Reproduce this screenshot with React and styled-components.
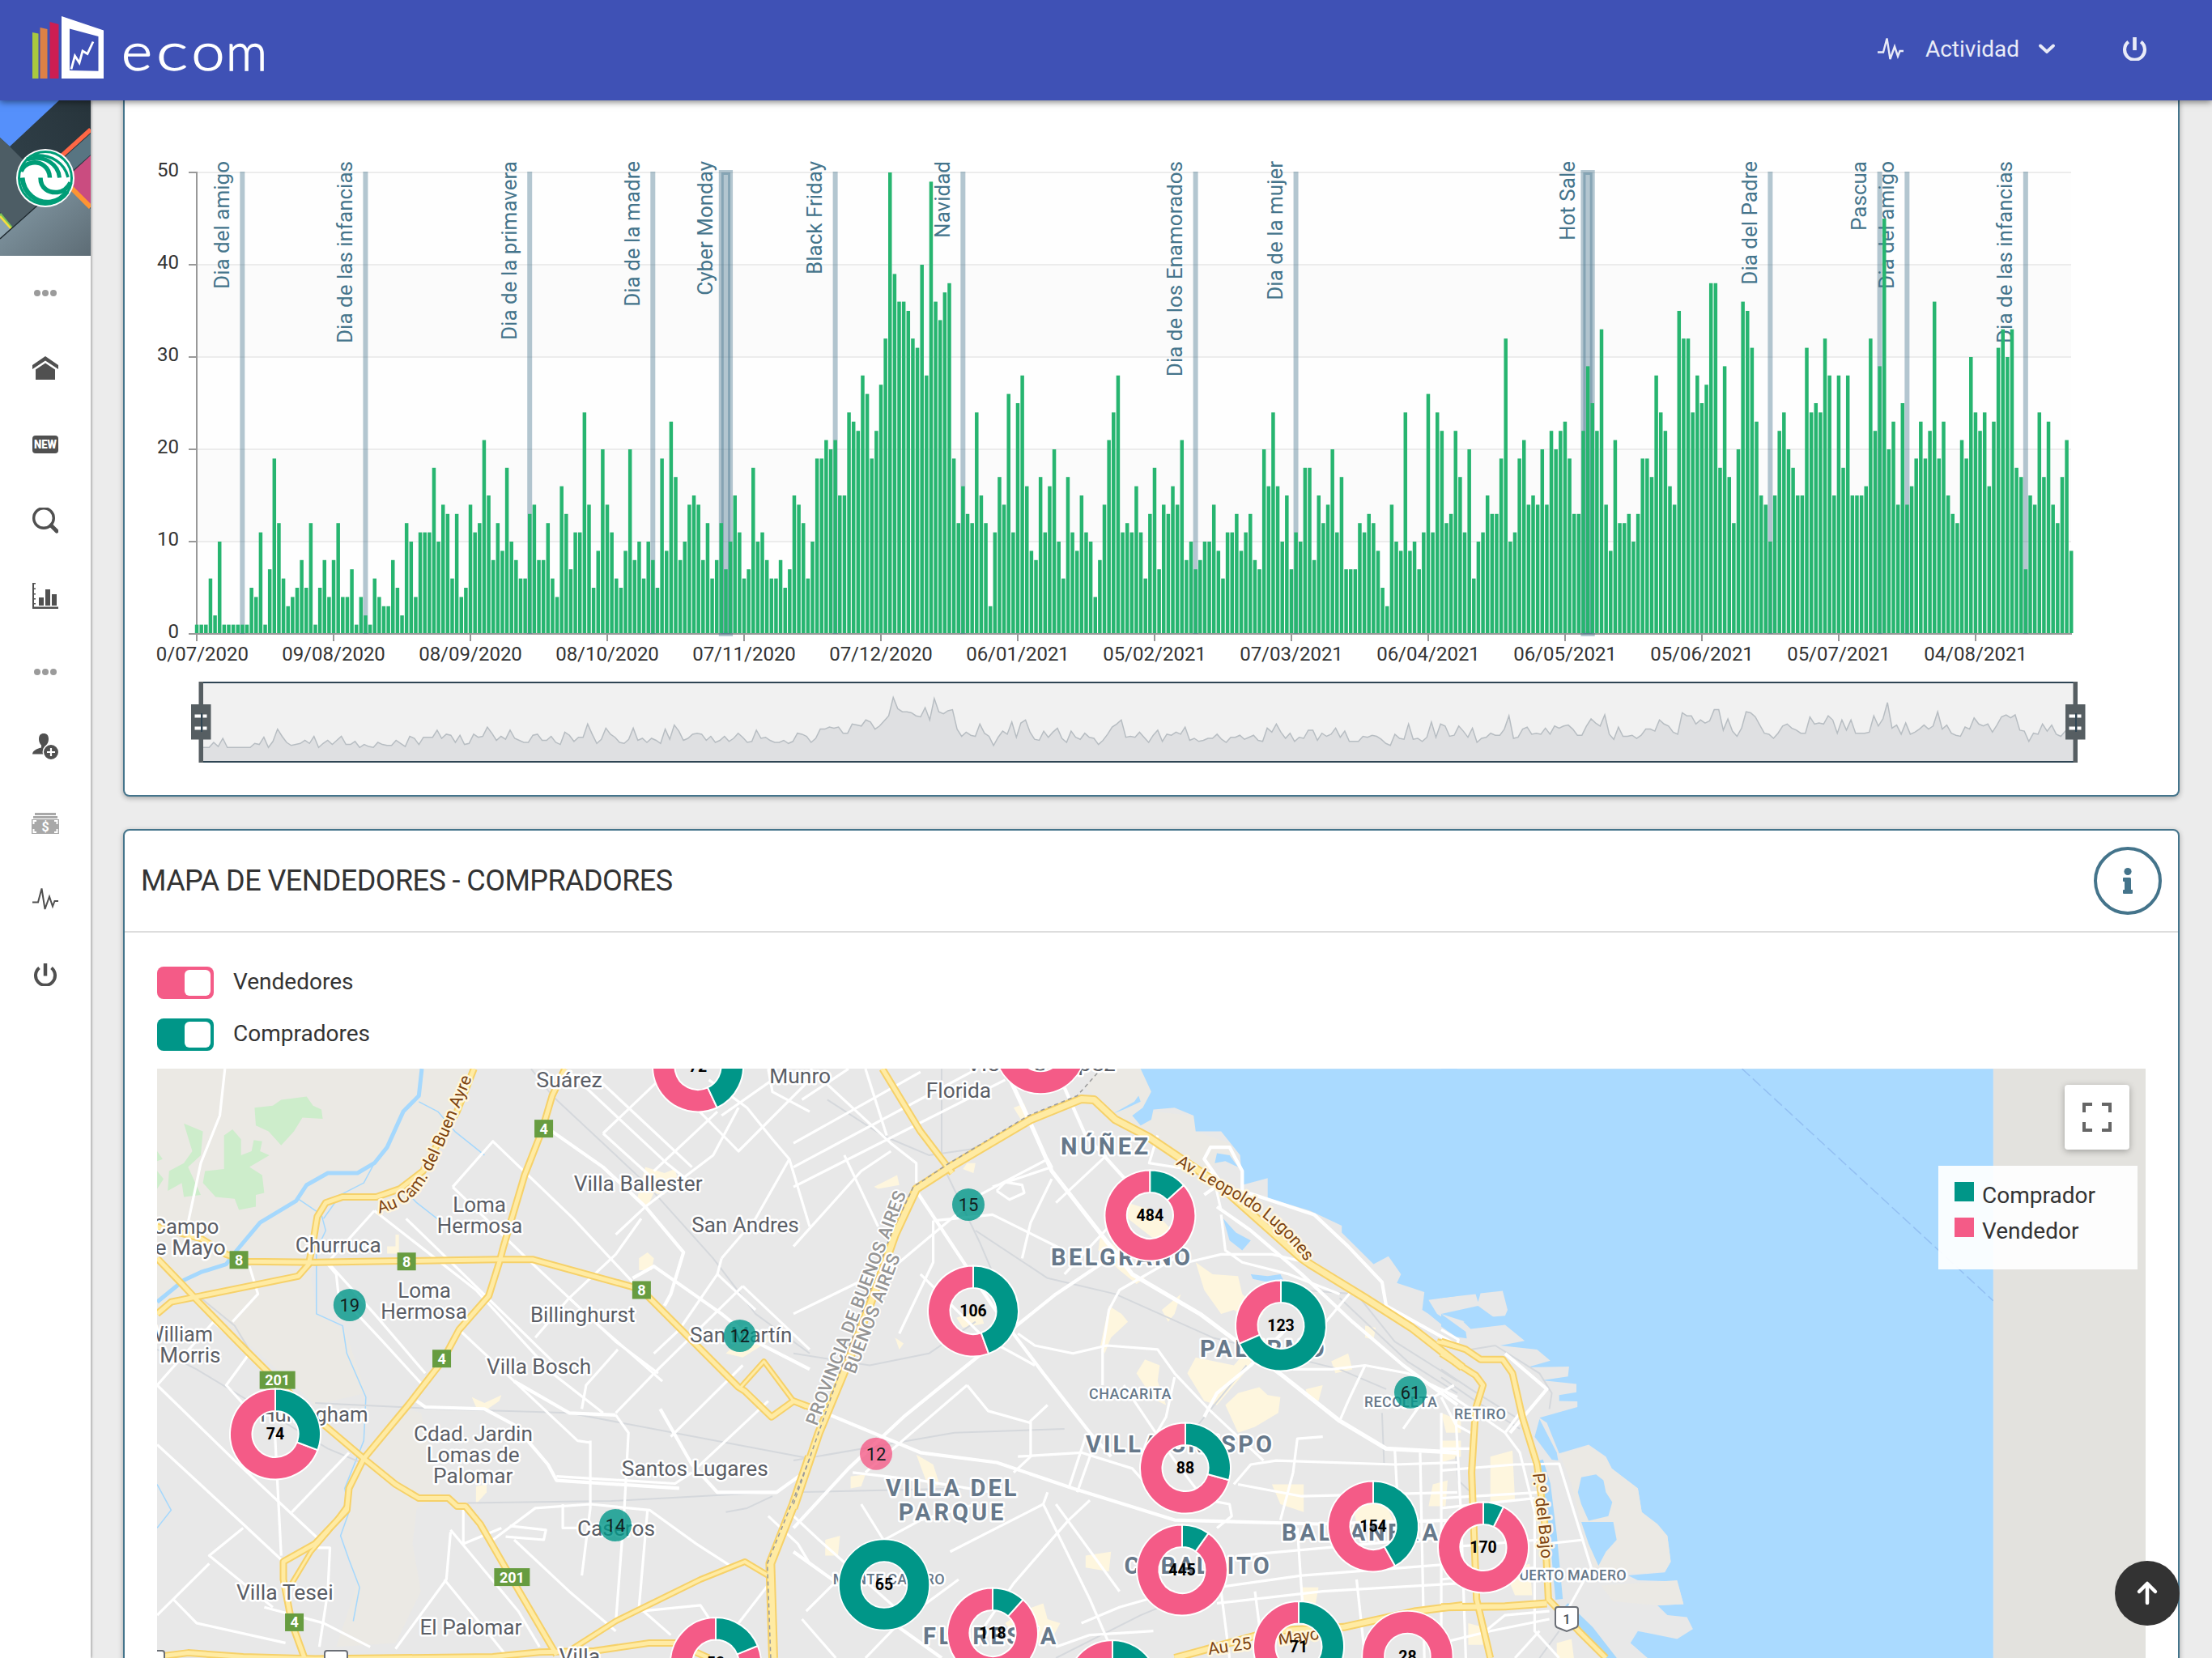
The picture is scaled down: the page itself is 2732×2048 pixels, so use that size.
import React from 'react';
import styled, { createGlobalStyle } from 'styled-components';

const GREEN = '#009688';
const PINK = '#f45b87';
const BLUE = '#44748b';

const GlobalStyle = createGlobalStyle`
  * { box-sizing: border-box; }
  html, body { margin: 0; padding: 0; height: 100%; overflow: hidden; }
  body { background: #ececec; color: #333; font-family: Roboto, "Liberation Sans", sans-serif; }
  svg { display: block; }
`;

/* ---------- layout ---------- */

const Page = styled.div`
  display: flex;
  flex-direction: column;
  width: 2732px;
  height: 2048px;
  overflow: hidden;
`;

const TopBar = styled.header`
  display: flex;
  align-items: center;
  justify-content: space-between;
  flex: none;
  height: 124px;
  padding: 0 81px 4px 40px;
  background: #3f51b5;
  color: #e9ebf7;
  position: relative;
  z-index: 5;
  box-shadow: 0 2px 8px rgba(0, 0, 0, 0.5);
`;

const TopNav = styled.nav`
  display: flex;
  align-items: center;
`;

const NavLink = styled.span`
  margin: 0 24px 0 27px;
  font-size: 28px;
  line-height: 36px;
  padding-top: 1px;
`;

const PowerSlot = styled.span`
  margin-left: 84px;
`;

const Body = styled.div`
  display: flex;
  flex: 1;
  min-height: 0;
`;

const Sidebar = styled.aside`
  display: flex;
  flex-direction: column;
  align-items: center;
  flex: none;
  width: 112px;
  background: #fff;
  box-shadow: 1px 0 3px rgba(0, 0, 0, 0.35);
`;

const MenuItem = styled.div`
  display: flex;
  align-items: center;
  justify-content: center;
  width: 112px;
  height: ${(p) => p.$h || 93.6}px;
  color: ${(p) => (p.$muted ? '#9b9b9b' : '#505050')};
`;

const Content = styled.main`
  display: flex;
  flex-direction: column;
  gap: 40px;
  flex: 1;
  padding: 0 40px;
`;

const Card = styled.section`
  flex: none;
  height: ${(p) => p.$h}px;
  background: #fff;
  border: 2px solid ${BLUE};
  border-top-width: ${(p) => (p.$open ? 0 : 2)}px;
  border-radius: ${(p) => (p.$open ? '0 0 8px 8px' : '8px')};
  box-shadow: 0 2px 6px rgba(0, 0, 0, 0.3);
  overflow: hidden;
`;

const CardHeader = styled.div`
  display: flex;
  align-items: center;
  justify-content: space-between;
  height: 126px;
  padding: 0 20px;
  border-bottom: 2px solid #ddd;
`;

const CardTitle = styled.h2`
  margin: 0;
  font-size: 36px;
  font-weight: 400;
  letter-spacing: -0.57px;
  color: #333;
`;

const InfoButton = styled.button`
  display: flex;
  align-items: center;
  justify-content: center;
  width: 84px;
  height: 84px;
  padding: 0;
  border: 4px solid ${BLUE};
  border-radius: 50%;
  background: #fff;
  color: ${BLUE};
`;

const CardBody = styled.div`
  padding: 42px 40px 0;
`;

const ToggleRow = styled.label`
  display: flex;
  align-items: center;
  gap: 24px;
  height: 40px;
  margin-bottom: ${(p) => p.$gap}px;
  font-size: 28px;
`;

const Track = styled.span`
  display: flex;
  justify-content: flex-end;
  width: 70px;
  height: 40px;
  padding: 4px;
  border-radius: 8px;
  background: ${(p) => p.$color};
`;

const Knob = styled.span`
  width: 32px;
  height: 32px;
  border-radius: 6px;
  background: #fff;
`;

const ToggleText = styled.span`
  padding-bottom: 4px;
`;

const MapFrame = styled.div`
  position: relative;
  width: 2456px;
  height: 728px;
`;

const MapControl = styled.button`
  position: absolute;
  top: 20px;
  right: 20px;
  display: flex;
  align-items: center;
  justify-content: center;
  width: 80px;
  height: 80px;
  padding: 0;
  border: 0;
  border-radius: 4px;
  background: #fff;
  box-shadow: 0 2px 8px rgba(0, 0, 0, 0.3);
`;

const Legend = styled.div`
  position: absolute;
  top: 120px;
  right: 10px;
  display: flex;
  flex-direction: column;
  gap: 8px;
  width: 246px;
  height: 128px;
  padding: 18px 20px;
  background: rgba(255, 255, 255, 0.93);
`;

const LegendItem = styled.div`
  display: flex;
  gap: 10px;
  height: 36px;
  font-size: 28px;
  line-height: 38px;
`;

const Swatch = styled.span`
  width: 24px;
  height: 24px;
  margin-top: 2px;
  background: ${(p) => p.$color};
`;

const BackToTop = styled.button`
  position: fixed;
  right: 40px;
  bottom: 40px;
  z-index: 6;
  display: flex;
  align-items: center;
  justify-content: center;
  width: 80px;
  height: 80px;
  padding: 0;
  border: 0;
  border-radius: 50%;
  background: #333;
`;

/* ---------- icons ---------- */

const PulseIcon = ({ light }) => (
  <svg width="32" height="32" viewBox={light ? '0 0 32 32' : '0 1 32 32'} fill="none" stroke="currentColor" strokeWidth={light ? 2.4 : 2} strokeLinejoin="miter">
    <path d="M0 20.5h7L11.5 3.5 15.500 29 21 13.500 25 25.500 27.500 19H32" />
  </svg>
);

const PowerIcon = ({ size = 28 }) => (
  <svg width={size} height={size} viewBox="0 0 28 28" fill="none" stroke="currentColor" strokeWidth="4">
    <path d="M6.500 5.500A12 12 0 1 0 21.500 5.500" />
    <path d="M14 0v15.500" strokeWidth="4.500" />
  </svg>
);

const DotsIcon = () => (
  <svg width="28" height="8" viewBox="0 0 28 8" fill="currentColor">
    <circle cx="4" cy="4" r="4" /><circle cx="14" cy="4" r="4" /><circle cx="24" cy="4" r="4" />
  </svg>
);

const HomeIcon = () => (
  <svg width="32" height="30" viewBox="0 1 32 30" fill="currentColor">
    <path d="M16 1 0 12v5L16 6.500l16 10.500v-5z" />
    <path d="M16 9.500 4 17.500V30h24V17.500z" />
  </svg>
);

const NewIcon = () => (
  <svg width="32" height="22" viewBox="0 0 32 22">
    <rect width="32" height="22" rx="4" fill="currentColor" />
    <text x="16" y="16" textAnchor="middle" textLength="28" lengthAdjust="spacingAndGlyphs" fill="#fff" fontSize="14" fontWeight="900" fontFamily="Roboto, sans-serif">NEW</text>
  </svg>
);

const SearchIcon = () => (
  <svg width="32" height="32" viewBox="0 1 32 32" fill="none" stroke="currentColor">
    <circle cx="14" cy="14" r="12.300" strokeWidth="3.400" />
    <path d="m23 23 7 7" strokeWidth="5" strokeLinecap="round" />
  </svg>
);

const BarsIcon = () => (
  <svg width="32" height="32" viewBox="0 0 32 32" fill="currentColor">
    <path d="M0 0h4v1.500H2v5h2V8H2v5h2v1.500H2v4.500h2v1.500H2V25h2v1.500H2V29.500h30V32H0z" />
    <path d="M8 18h6v10H8zM16 8h6v20h-6zM24 14h6v14h-6z" />
  </svg>
);

const UserAddIcon = () => (
  <svg width="32" height="32" viewBox="0 0 32 32" fill="currentColor">
    <path d="M14 0c4 0 6 2.500 6 7 0 3.500-1.500 6-3 7.500V17l-3 8.500H0c.500-4.500 5-6.500 11-8v-3C9.500 13 8 10.500 8 7c0-4.500 2-7 6-7z" />
    <circle cx="23" cy="23" r="9.700" stroke="#fff" strokeWidth="1.500" />
    <path d="M23 18v10M18 23h10" stroke="#fff" strokeWidth="2.200" />
  </svg>
);

const MoneyIcon = () => (
  <svg width="34" height="26" viewBox="0 0 34 26" fill="#a8a8a8">
    <path d="M4 0h26v3H4zM2 4h30v3H2zM0 8h34v18H0z" />
    <path d="M2.500 14v-4H6M28 10h3.500v4M2.500 20v4H6M28 24h3.500v-4" fill="none" stroke="#fff" strokeWidth="2" />
    <text x="17" y="23" textAnchor="middle" fontSize="16" fontWeight="700" fill="#fff" fontFamily="Roboto, sans-serif">$</text>
  </svg>
);

const Brand = () => (
  <svg width="300" height="84" viewBox="40 18 300 84">
    <path d="M40 40l7.500 1.500V97H40z" fill="#a9c93f" />
    <path d="M49.500 34l9 2V97h-9z" fill="#dd8146" />
    <path d="M61.500 27l11 3V97h-11z" fill="#cc1e52" />
    <path fillRule="evenodd" d="M76 20l52 17.500V97H76zM86 35.500V87l35.500 .8V45z" fill="#fff" />
    <path d="M88 85.500l4.500-16.500 5.500 8.500 4-14.500 6 3.500 7-15" fill="none" stroke="#fff" strokeWidth="2.800" />
    <g fill="#fff" stroke="#fff" strokeWidth="1.300" fontFamily="Lato, sans-serif" fontWeight="300" fontSize="66">
      <text x="150" y="86.500" textLength="38" lengthAdjust="spacingAndGlyphs">e</text>
      <text x="193" y="86.500" textLength="39" lengthAdjust="spacingAndGlyphs">c</text>
      <text x="236.500" y="86.500" textLength="41" lengthAdjust="spacingAndGlyphs">o</text>
      <text x="279" y="86.500" textLength="51" lengthAdjust="spacingAndGlyphs">m</text>
    </g>
  </svg>
);

const Cover = () => (
  <svg width="112" height="192" viewBox="0 124 112 192">
    <defs>
      <linearGradient id="coverSlate" x1="0" y1="0" x2="1" y2="1">
        <stop offset="0" stopColor="#8aa1ad" /><stop offset="1" stopColor="#5d6c75" />
      </linearGradient>
      <linearGradient id="coverDark" x1="0" y1="1" x2="1" y2="0">
        <stop offset="0" stopColor="#34454e" /><stop offset="1" stopColor="#27343b" />
      </linearGradient>
    </defs>
    <rect y="124" width="112" height="192" fill="url(#coverDark)" />
    <path d="M0 124h73L12 181 0 170z" fill="#5590fb" />
    <path d="M0 170l12 11 60 60-27 14-29 26-16-19z" fill="#4d5d65" />
    <path d="M112 165v26L70 228V203z" fill="#587582" />
    <path d="M112 160 60 207" stroke="#ff6745" strokeWidth="5.500" />
    <path d="M112 192 86 216v14l26 24z" fill="#ca4c80" />
    <path d="M0 294l45-40 41-30 26 34v58H0z" fill="url(#coverSlate)" />
    <path d="M84 228l28 28" stroke="#fe9433" strokeWidth="6" />
    <path d="M0 268l14 14-14 13z" fill="#8da3ae" />
    <path d="M0 264l15 18" stroke="#7bc558" strokeWidth="3" />
    <path d="M0 267l14 16" stroke="#f8de3c" strokeWidth="2.500" />
    <path d="M0 295 46 254" stroke="#1f2a30" strokeWidth="1.500" />
    <circle cx="56" cy="220" r="36" fill="#fff" />
    <circle cx="56" cy="220" r="32.500" fill="#fff" stroke="#009d77" strokeWidth="3" />
    <g fill="none" stroke="#009d77">
      <path d="M61.500 219.500C61 206 50 199.500 40 201c-7 1-12 5-14 11" strokeWidth="5.500" />
      <path d="M73.500 219.500C72 203 56 191 33 197" strokeWidth="5" />
      <path d="M84 219C80 202 64 190 41 192" strokeWidth="3.500" />
      <path d="M50 219.500c0 13 10 19 21 18 9-1 13-6 16-12" strokeWidth="5.500" />
      <path d="M27.500 219.500C29 239 46 252 63 249.500c9-1.500 15-6 20-13" strokeWidth="6" />
    </g>
  </svg>
);

/* ---------- daily activity chart ---------- */

const DAILY = [
  1,1,1,6,2,10,1,1,1,1,1,1,5,4,11,1,7,19,12,6,3,4,5,8,5,12,1,5,8,4,8,12,4,4,7,1,4,2,1,6,4,3,3,8,5,2,12,10,4,11,
  11,11,18,10,14,13,6,13,4,5,14,11,12,21,15,8,12,9,18,10,8,6,6,13,14,8,8,12,6,4,16,13,7,11,11,24,14,5,9,20,14,11,6,5,9,20,8,10,6,10,
  8,5,19,9,23,17,8,10,14,15,14,8,12,6,8,12,7,10,15,11,6,7,18,10,11,8,6,6,8,5,7,15,14,12,6,10,19,19,21,20,21,15,15,24,23,22,28,26,19,22,
  27,32,50,39,36,36,35,32,31,40,28,49,36,34,37,38,19,12,16,13,12,24,15,12,3,11,17,14,26,11,25,28,16,9,8,17,11,16,20,10,6,17,11,9,15,11,10,4,8,14,
  21,24,28,11,12,11,16,11,6,13,18,7,14,13,16,14,21,8,10,7,8,10,10,14,9,6,11,11,13,9,11,13,8,7,20,16,24,16,10,15,7,11,10,18,18,8,15,12,14,20,
  11,17,7,7,7,12,11,13,12,9,5,3,14,10,9,24,9,10,7,11,26,11,24,22,12,13,22,17,11,20,6,10,11,15,13,13,19,32,10,11,19,21,14,15,14,20,14,22,20,22,
  23,19,13,13,22,29,25,22,33,14,9,21,12,12,13,10,13,19,19,17,28,24,22,16,14,35,32,32,24,28,25,27,38,38,18,29,17,12,20,36,35,31,23,15,14,
  10,15,22,24,20,18,15,15,31,24,25,24,32,28,15,28,18,28,15,15,15,16,32,22,29,45,20,23,14,25,14,16,19,23,19,22,36,19,23,15,13,12,21,19,30,24,22,24,16,23,
  31,33,30,33,18,17,7,15,14,24,17,23,14,12,17,21,9,
];

const EVENTS = [
  [10, 10, 'Dia del amigo'], [37, 37, 'Dia de las infancias'], [73, 73, 'Dia de la primavera'], [100, 100, 'Dia de la madre'],
  [115, 117, 'Cyber Monday'], [140, 140, 'Black Friday'], [168, 168, 'Navidad'], [219, 219, 'Dia de los Enamorados'],
  [241, 241, 'Dia de la mujer'], [304, 306, 'Hot Sale'], [345, 345, 'Dia del Padre'], [369, 369, 'Pascua'],
  [375, 375, 'Dia del amigo'], [401, 401, 'Dia de las infancias'],
];

const DATES = ['0/07/2020', '09/08/2020', '08/09/2020', '08/10/2020', '07/11/2020', '07/12/2020', '06/01/2021', '05/02/2021', '07/03/2021', '06/04/2021', '06/05/2021', '05/06/2021', '05/07/2021', '04/08/2021'];

const X0 = 243, STEP = 5.633, BASE = 783, UNIT = 11.4;
const dayX = (i) => X0 + i * STEP;

const AxisText = styled.text`
  font: 400 24px Roboto, sans-serif;
  fill: #333;
`;

const EventText = styled.text`
  font: 400 26px Roboto, sans-serif;
  fill: ${BLUE};
`;

const Handle = ({ x }) => (
  <g>
    <rect x={x - 2.5} y="842" width="5.500" height="100" fill="#565e62" />
    <rect x={x - 12} y="870" width="24.500" height="43.500" fill="#565e62" />
    <path d={`M${x - 7.500} 884.500h7.500M${x + 2.500} 884.500h5M${x - 7.500} 899.500h7.500M${x + 2.500} 899.500h5`} stroke="#fff" strokeWidth="4" />
    <path d={`M${x + 1} 881v23`} stroke="#2f4554" strokeWidth="2" />
  </g>
);

const ActivityChart = () => {
  const overview = DAILY.map((v, i) => `${(247 + i * STEP).toFixed(1)},${(924.6 - v * 1.262).toFixed(1)}`).join(' ');
  return (
    <svg width="2536" height="858" viewBox="154 124 2536 858">
      {[0, 1, 2, 3, 4].map((k) => (
        <rect key={k} x="243" y={213 + k * 114} width="2315" height="114" fill={k % 2 ? '#fbfbfb' : '#fefefe'} />
      ))}
      {[0, 1, 2, 3, 4].map((k) => <rect key={k} x="243" y={212 + k * 114} width="2315" height="2" fill="#ececec" />)}
      {[0, 1, 2, 3, 4, 5].map((k) => (
        <g key={k}>
          <rect x="233" y={212 + k * 114} width="10" height="2" fill="#999" />
          <AxisText x="221" y={218 + k * 114} textAnchor="end">{50 - k * 10}</AxisText>
        </g>
      ))}
      <rect x="242" y="212" width="2" height="571" fill="#999" />
      <rect x="242" y="782" width="2317" height="2" fill="#999" />
      {DATES.map((d, k) => {
        const x = Math.round(dayX(k * 30));
        return (
          <g key={d}>
            <rect x={x - 1} y="784" width="2" height="8" fill="#999" />
            <AxisText x={k ? x : 307} y="816" textAnchor={k ? 'middle' : 'end'}>{d}</AxisText>
          </g>
        );
      })}
      {EVENTS.map(([a, b, name]) => (
        <g key={name + a}>
          {a === b
            ? <rect x={dayX(a) - 3} y="212" width="6" height="571" fill={BLUE} fillOpacity="0.4" />
            : <rect x={dayX(a)} y="213" width={dayX(b) - dayX(a)} height="570" fill={BLUE} fillOpacity="0.4" stroke={BLUE} strokeOpacity="0.4" strokeWidth="6" />}
          <EventText transform={`translate(${(dayX((a + b) / 2) - 16.5).toFixed(1)} 199) rotate(-90)`} textAnchor="end">{name}</EventText>
        </g>
      ))}
      {DAILY.map((v, i) => (
        <rect key={i} x={(dayX(i) - 2.2).toFixed(2)} y={(BASE - v * UNIT).toFixed(1)} width="4.500" height={(v * UNIT - 1).toFixed(1)} fill="#27b570" />
      ))}
      <rect x="247" y="843" width="2316" height="98" fill="#f1f1f1" />
      <polygon points={`247,941 ${overview} 2563,941`} fill="#dfe0e2" />
      <polyline points={overview} fill="none" stroke="#b7bdc2" strokeWidth="1.500" />
      <path d="M247 843H2563M247 941H2563" stroke="#2f4554" strokeWidth="2" />
      <Handle x={248} />
      <Handle x={2563} />
    </svg>
  );
};

/* ---------- city map ---------- */

// Each map sheet is digitised on its own grid and placed by scale and offset.
const SHEETS = {
  west: [180, 0.52296, 0.4898],
  centre: [980, 0.52296, 0.4898],
  east: [1780, 0.60714, 0.4898],
};
const px = (s, x) => SHEETS[s][0] + x * SHEETS[s][1];
const py = (s, y) => 1280 + y * SHEETS[s][2];
const project = (s, line) =>
  line.trim().split(/\s+/).map((p) => {
    const [x, y] = p.split(',').map(Number);
    return `${px(s, x).toFixed(1)},${py(s, y).toFixed(1)}`;
  }).join(' ');

const AREAS = [
  ['west', '#ebe9e4', '27,82 777,82 740,190 655,340 560,400 450,400 400,470 395,560 370,600 130,655 27,690'],
  ['west', '#ebe9e4', '27,430 130,480 240,570 400,570 390,610 405,700 470,740 520,900 400,930 330,860 130,665 27,560'],
  ['west', '#ebe9e4', '515,1075 620,940 650,950 700,1160 640,1190 630,1280 650,1400 590,1530 450,1540 500,1380 465,1260 480,1150'],
  ['west', '#cdedcb', '257,180 300,175 320,160 380,152 395,175 415,185 418,208 370,205 350,240 320,275 290,240 260,225'],
  ['west', '#cdedcb', '90,220 135,240 130,300 100,330 130,400 90,405 85,370 52,390 55,340 90,320 110,290'],
  ['west', '#cdedcb', '185,250 205,235 225,260 225,300 250,290 255,262 275,265 270,290 292,300 245,330 275,350 280,395 260,400 260,430 220,438 210,410 165,405 135,370 140,340 185,335'],
  ['west', '#cdedcb', '27,290 40,310 27,315'],
  ['west', '#cdedcb', '27,340 42,360 27,385'],
  ['west', '#fef6de', '1180,330 1225,345 1250,335 1255,355 1220,370 1225,400 1200,395 1185,430 1160,415 1165,390'],
  ['west', '#fef6de', '1165,560 1185,545 1200,560 1195,590 1165,590'],
  ['west', '#fef6de', '770,910 800,925 840,905 835,920 800,945 780,935'],
  ['west', '#fef6de', '780,1135 805,1130 805,1150 780,1180'],
  ['west', '#fef6de', '1400,770 1465,745 1470,770 1410,810 1370,800'],
  ['west', '#fef6de', '570,530 590,530 590,500 598,500 598,548 570,548'],
  ['centre', '#ebe9e4', '720,82 840,82 850,190 945,200 950,240 1030,270 1050,300 960,340 840,260 760,200 690,130'],
  ['centre', '#fef6de', '790,420 850,440 895,490 850,510 790,460'],
  ['centre', '#fef6de', '725,500 760,530 800,600 830,610 810,625 770,590 720,540'],
  ['centre', '#fef6de', '930,850 950,810 1040,830 1080,780 1080,830 1000,930 970,920'],
  ['centre', '#fef6de', '1020,930 1050,900 1100,885 1120,905 1150,910 1145,950 1090,985 1050,1000'],
  ['centre', '#fef6de', '950,570 990,600 1050,605 1060,650 1110,700 1080,720 1040,690 1010,700 970,640'],
  ['centre', '#fef6de', '810,850 830,815 865,830 860,870 880,930 850,915'],
  ['centre', '#fef6de', '745,680 775,700 790,720 750,760 735,800 725,780'],
  ['centre', '#fef6de', '290,1055 330,1080 345,1130 320,1140'],
  ['centre', '#fef6de', '240,760 260,775 250,790'],
  ['centre', '#fef6de', '385,710 440,690 450,725 400,735'],
  ['centre', '#fef6de', '500,1480 540,1450 590,1430 600,1470 630,1480 610,1520 540,1540'],
  ['centre', '#fef6de', '690,1310 750,1300 745,1350 690,1340'],
  ['centre', '#fef6de', '1200,1390 1240,1390 1230,1450 1200,1440'],
  ['centre', '#fef6de', '1130,1130 1205,1130 1205,1200 1150,1180'],
  ['centre', '#fef6de', '1320,1180 1400,1180 1420,1230 1330,1230'],
  ['centre', '#fef6de', '1510,1130 1545,1120 1540,1185 1500,1185'],
  ['centre', '#fef6de', '1270,820 1310,800 1320,840 1280,850'],
  ['centre', '#fef6de', '1350,730 1375,735 1370,765 1350,760'],
  ['centre', '#fef6de', '1210,890 1250,880 1240,920 1215,915'],
  ['centre', '#fef6de', '75,1270 110,1260 105,1310 75,1310'],
  ['centre', '#fef6de', '135,1110 170,1105 160,1135 135,1140'],
  ['centre', '#fef6de', '190,380 245,350 250,375 200,385'],
  ['centre', '#fef6de', '410,320 430,320 425,345 400,335'],
  ['centre', '#fef6de', '520,180 545,170 560,215 540,215'],
  ['centre', '#fef6de', '870,690 915,650 900,700 885,720'],
  ['east', '#fef6de', '100,1060 145,1045 150,1170 100,1180'],
  ['east', '#fef6de', '0,950 40,970 40,1000 10,1000'],
  ['east', '#fef6de', '0,1020 40,1020 40,1060 0,1075'],
  ['east', '#fef6de', '130,1350 180,1330 185,1410 150,1410'],
  ['east', '#fef6de', '235,1530 265,1520 270,1568 235,1568'],
  ['east', '#fef6de', '55,1480 85,1490 85,1535 55,1535'],
];

const WATER = [
  ['centre', '820,82 1568,82 1568,655 1500,665 1520,700 1568,735 1568,760 1500,700 1485,690 1490,645 1425,622 1435,600 1405,555 1370,575 1295,495 1295,478 1220,440 1120,408 1120,358 1060,375 1055,300 1010,240 950,240 945,200 900,180 850,185 845,210 820,225 800,200 825,180 845,140'],
  ['centre', '1000,295 1030,300 1050,330 1020,315 995,320'],
  ['centre', '1015,460 1045,495 1080,515 1060,540 1030,515'],
  ['centre', '1080,600 1120,605 1150,600 1160,620 1120,620 1085,612'],
  ['centre', '755,195 805,165 815,150 820,165 780,185'],
  ['east', '0,82 1123,82 1123,1568 420,1568 385,1530 400,1500 480,1520 512,1495 500,1465 460,1460 440,1435 493,1432 480,1375 400,1372 380,1360 455,1352 467,1325 460,1260 408,1200 400,1140 347,1090 335,1060 300,1030 240,1052 215,975 200,962 277,935 277,921 240,920 240,905 275,898 275,877 205,868 258,858 260,833 175,835 222,818 195,790 120,780 170,768 130,728 60,738 45,720 100,708 130,705 135,690 125,642 80,648 75,670 70,650 0,660'],
  ['east', '0,700 75,680 125,725 60,730 45,718 0,700'],
  ['east', '0,700 50,745 52,762 30,758 0,732'],
  ['east', '200,965 235,1050 238,1070 225,1068 190,1010'],
  ['east', '285,1112 315,1105 330,1120 335,1150 348,1175 340,1210 300,1222 285,1180 278,1150'],
  ['east', '285,1225 350,1225 357,1270 335,1300 320,1335 300,1280'],
];

const SAND = ['east', '240,1055 300,1032 335,1062 347,1090 400,1140 408,1200 440,1230 460,1260 467,1325 455,1350 400,1355 310,1340 285,1230 265,1130 250,1080'];

const STREAMS = [
  ['west', 5, '652,82 645,150 608,190 570,280 540,320 500,345 430,345 380,375 355,415 270,470 215,540 190,575 130,595 90,615 27,670'],
  ['west', 1.5, '360,410 415,450 425,490 403,540 403,700 465,730 475,800 520,910 515,1020 470,1140 480,1200 460,1260 480,1320 505,1390 490,1475'],
  ['west', 1.5, '645,165 690,190 730,240 800,300'],
  ['west', 1.5, '540,320 515,370 460,400 420,460'],
  ['west', 1.5, '27,1130 60,1195 27,1240'],
  ['west', 1.5, '600,375 640,420 700,470'],
  ['east', 9, '200,1070 215,1130 228,1260 240,1420'],
  ['east', 14, '250,1440 300,1500 350,1580'],
];

const RAILS = [
  ['west', '910,82 960,150 1180,370 1340,560 1440,700 1568,800'],
  ['west', '27,790 120,840 430,1040 520,1080'],
  ['west', '130,660 210,730 250,800'],
  ['west', '400,925 700,940 1000,950 1568,1065'],
  ['west', '760,1177 1100,1172 1480,1150'],
  ['west', '1370,1200 1420,1190 1480,1160'],
  ['centre', '80,160 210,250 320,300 420,285 580,200 640,180'],
  ['centre', '350,82 350,320 440,520 480,620'],
  ['centre', '430,490 600,610 760,650 990,760 1290,840 1400,890'],
  ['centre', '0,1070 380,1000 640,990'],
  ['centre', '0,1150 400,1140'],
  ['centre', '0,800 180,830 320,800 430,720'],
  ['centre', '1200,640 1330,650 1420,770 1568,870'],
  ['centre', '1290,660 1350,720 1450,820 1568,900'],
  ['centre', '620,1568 820,1460 1000,1380'],
  ['centre', '1070,830 940,1000'],
  ['centre', '1390,950 1395,1080'],
  ['east', '0,840 60,890 150,960'],
  ['east', '0,860 70,920 160,990'],
  ['east', '60,790 110,780 200,850 225,900 220,940'],
  ['east', '30,1060 35,1120 60,1150'],
  ['east', '200,1568 240,1500'],
];

const STREETS = [
  ['west', 4, '187,82 175,200 130,320 100,470'],
  ['west', 4, '725,380 820,265 1010,460 1150,620'],
  ['west', 4, '540,440 780,640 960,850 1080,950'],
  ['west', 4, '540,440 430,570 540,700 660,850'],
  ['west', 4, '615,460 760,610 980,840'],
  ['west', 4, '430,575 450,600 455,650 560,770 650,875'],
  ['west', 4, '725,380 900,560 1060,720 1220,870'],
  ['west', 5, '960,240 1080,330 1180,430 1270,545 1240,650 1225,680'],
  ['west', 4, '1000,90 1110,200 1230,320 1300,380'],
  ['west', 4, '1050,90 1160,200 1290,330'],
  ['west', 4, '1080,245 1240,82'],
  ['west', 4, '1080,245 1230,390'],
  ['west', 4, '1110,500 1180,430 1340,300 1400,180'],
  ['west', 4, '1200,340 1350,190'],
  ['west', 4, '1000,660 1110,550 1170,460'],
  ['west', 4, '920,760 1000,660 1110,770 1210,850'],
  ['west', 5, '1150,610 1200,580 1360,700 1440,770 1568,840'],
  ['west', 4, '1410,630 1210,840 1110,950'],
  ['west', 4, '1350,600 1260,740 1200,800'],
  ['west', 4, '1410,630 1568,790'],
  ['west', 4, '1360,560 1350,600 1440,690'],
  ['west', 4, '1290,170 1400,290 1568,110'],
  ['west', 4, '1330,110 1420,180 1480,260 1520,310 1568,480'],
  ['west', 4, '1520,310 1440,460 1360,560'],
  ['west', 4, '1470,82 1480,140 1568,190'],
  ['west', 4, '1360,200 1480,110'],
  ['west', 5, '870,870 1000,950 1110,955'],
  ['west', 4, '740,740 870,870 1020,1020 1050,1025'],
  ['west', 4, '1030,940 1040,880 1115,790'],
  ['west', 5, '640,920 660,935 800,940 870,980 950,1080 970,1120 1260,1140'],
  ['west', 4, '970,1110 1250,1128 1290,1100'],
  ['west', 4, '1050,1020 1050,1190 1030,1360'],
  ['west', 4, '1110,955 1140,1000 1130,1200 1110,1480'],
  ['west', 4, '27,880 160,720 245,800 190,880 250,950'],
  ['west', 4, '27,880 210,1070 410,1270'],
  ['west', 4, '27,1030 210,1210 320,1320'],
  ['west', 4, '305,1000 320,1310'],
  ['west', 4, '345,1200 480,1050'],
  ['west', 4, '230,1240 150,1310 300,1440'],
  ['west', 4, '27,1460 150,1330'],
  ['west', 4, '65,1420 120,1480 330,1530'],
  ['west', 4, '280,1440 420,1480 530,1540'],
  ['west', 4, '405,1290 435,1290 430,1400 410,1540'],
  ['west', 4, '590,1545 710,1370 720,1250'],
  ['west', 4, '705,1370 820,1520 850,1560'],
  ['west', 4, '720,1245 880,1450 930,1540'],
  ['west', 4, '750,1190 750,1280 840,1240'],
  ['west', 4, '820,1270 920,1190 1050,1180 1190,1195 1300,1280 1380,1335'],
  ['west', 4, '860,1235 945,1245 940,1270 850,1262'],
  ['west', 4, '870,1270 1000,1400 1110,1500'],
  ['west', 4, '1185,1195 1165,1440 1240,1510'],
  ['west', 4, '985,1180 985,1240 1030,1240'],
  ['west', 5, '1215,940 1290,1080 1350,1150 1490,1150 1568,1090'],
  ['west', 4, '1240,1010 1410,830'],
  ['west', 4, '1300,1090 1470,920'],
  ['west', 4, '1170,1450 1310,1435 1350,1500'],
  ['west', 4, '1470,1210 1540,1280 1568,1330'],
  ['west', 4, '1400,1480 1480,1370'],
  ['west', 4, '245,580 265,650 205,720'],
  ['centre', 6, '500,82 560,220 610,340 800,600 960,700 1160,860 1290,970 1400,1040 1568,1050'],
  ['centre', 5, '640,130 690,250 800,380'],
  ['centre', 5, '1000,430 1080,490 1200,600 1320,720 1440,830 1568,930'],
  ['centre', 5, '290,390 340,470 470,680 590,850 700,1000 750,1060'],
  ['centre', 5, '30,930 300,1050 480,1075 660,1140 900,1220 1240,1230 1568,1220'],
  ['centre', 4, '140,1100 300,1120 470,1150'],
  ['centre', 4, '330,465 470,450 640,540'],
  ['centre', 4, '330,465 330,570 250,750'],
  ['centre', 4, '0,700 250,570 440,400 600,310 610,330 470,380'],
  ['centre', 4, '0,270 300,90'],
  ['centre', 4, '0,330 420,90'],
  ['centre', 4, '0,380 500,110'],
  ['centre', 4, '40,82 230,270 290,320 290,370'],
  ['centre', 4, '170,82 220,250'],
  ['centre', 4, '20,160 130,82'],
  ['centre', 4, '0,530 160,340 230,290'],
  ['centre', 4, '120,300 200,480'],
  ['centre', 4, '300,600 450,760 570,830'],
  ['centre', 5, '0,1240 130,1090 260,960 410,830 620,650 760,550'],
  ['centre', 4, '530,750 570,780 660,800 740,780 860,790 900,850 980,940'],
  ['centre', 4, '730,880 730,790 745,690 770,640 900,560'],
  ['centre', 4, '610,360 560,470 540,560'],
  ['centre', 4, '640,600 780,440'],
  ['centre', 4, '740,300 620,420'],
  ['centre', 5, '970,400 1010,370 970,310 985,280 1030,280 1060,340 1060,390 1230,450 1310,530 1390,620 1400,680 1568,780'],
  ['centre', 4, '1010,450 1020,540 1060,570 1170,600 1290,650'],
  ['centre', 4, '1320,640 1250,730 1200,790'],
  ['centre', 4, '860,250 840,320 990,345 1010,440'],
  ['centre', 4, '930,570 1010,550 1130,550 1210,570'],
  ['centre', 5, '970,960 1000,900 1080,830 1180,720'],
  ['centre', 4, '1440,990 1480,930 1560,880'],
  ['centre', 4, '1180,840 1270,840 1350,830 1450,850 1568,910'],
  ['centre', 4, '1350,830 1310,920 1290,970'],
  ['centre', 4, '1250,1010 1190,1015 1180,1100 1150,1220'],
  ['centre', 4, '1040,1130 1080,1080 1140,1070 1420,1080 1568,1075'],
  ['centre', 4, '1420,1040 1430,1230'],
  ['centre', 4, '1480,1050 1490,1568'],
  ['centre', 4, '1530,950 1530,1568'],
  ['centre', 4, '1050,1130 1200,1160 1568,1150'],
  ['centre', 4, '1050,1310 1568,1260'],
  ['centre', 4, '1000,1390 1200,1360 1568,1330'],
  ['centre', 4, '1000,1430 1250,1400 1568,1380'],
  ['centre', 4, '1190,1240 1200,1400 1210,1540'],
  ['centre', 4, '1010,1400 1030,1568'],
  ['centre', 4, '1090,1400 1110,1568'],
  ['centre', 4, '1330,1370 1350,1568'],
  ['centre', 4, '590,1180 700,1420 760,1568'],
  ['centre', 4, '620,1180 770,1400'],
  ['centre', 4, '650,1140 690,1010'],
  ['centre', 4, '670,1150 710,1030'],
  ['centre', 4, '370,1300 480,1240 590,1180 600,1150'],
  ['centre', 5, '0,1300 170,1430 350,1568'],
  ['centre', 4, '0,1210 60,1270 250,1450'],
  ['centre', 4, '30,1450 180,1290 300,1220 430,1180'],
  ['centre', 4, '160,1180 300,1420'],
  ['centre', 4, '20,1470 100,1568'],
  ['centre', 4, '170,1568 250,1480 390,1370'],
  ['centre', 4, '400,1568 520,1380 650,1220 700,1170'],
  ['centre', 4, '600,930 560,970 560,1060 520,1100'],
  ['centre', 4, '410,880 460,945 560,975'],
  ['centre', 4, '410,880 170,1100'],
  ['centre', 4, '530,1060 680,1050 800,1090 850,1150'],
  ['centre', 4, '900,860 880,960 830,1050'],
  ['centre', 4, '780,880 830,960 900,1070 950,1140'],
  ['centre', 4, '980,940 1040,1000 1110,1070'],
  ['centre', 4, '680,1480 770,1440 900,1400'],
  ['centre', 4, '620,1540 700,1510 850,1500'],
  ['centre', 4, '480,390 500,368 540,375 545,395 510,412 480,390'],
  ['centre', 4, '980,1170 1030,1180 1035,1210 1000,1240'],
  ['east', 5, '130,800 215,890 140,1000'],
  ['east', 4, '0,740 35,765 30,790'],
  ['east', 4, '0,890 60,940 130,1000 160,1050 190,1200 190,1500 240,1568'],
  ['east', 4, '0,910 30,980 60,1000'],
  ['east', 4, '30,970 40,1200 50,1568'],
  ['east', 4, '0,1095 150,1080 240,1078 305,1340 260,1440'],
  ['east', 4, '0,1165 200,1150'],
  ['east', 4, '0,1190 190,1165'],
  ['east', 4, '215,1280 290,1270'],
  ['east', 4, '0,1290 200,1270'],
  ['east', 4, '0,1370 190,1340'],
  ['east', 4, '90,1500 130,1460 220,1450'],
  ['east', 4, '0,1530 100,1500 220,1470'],
  ['east', 4, '150,1568 200,1500'],
  ['east', 4, '130,1000 160,950'],
  ['east', 4, '0,1040 60,1040'],
];

const HIGHWAYS = [
  ['west', 9, '775,82 735,190 690,270 655,340 600,385 545,405 465,405 425,420 405,455 395,520 385,575 360,605 130,655 60,670 27,700'],
  ['west', 9, '27,480 130,510 190,550 240,568 400,570 830,563 915,563 1150,632 1185,655 1400,885 1415,895 1478,960 1530,920 1568,935'],
  ['west', 7, '1405,885 1460,820 1530,920'],
  ['west', 9, '990,82 960,150 935,240 895,350 845,530 835,570 810,655 740,740 700,820 620,930 515,1065 480,1140 475,1195 400,1280 325,1325 325,1370 345,1480 375,1568'],
  ['west', 9, '27,560 90,630 125,670 235,790 310,870 410,970 515,1065 590,1130 645,1165 715,1165 735,1185 755,1185 790,1230 860,1360 970,1560'],
  ['west', 7, '475,1185 430,1250 390,1300 345,1380'],
  ['west', 9, '27,1565 100,1555 230,1565 400,1570 820,1565 930,1553 1060,1550 1190,1530 1250,1530 1330,1568'],
  ['west', 8, '1000,1550 1110,1475 1310,1370 1415,1325 1470,1360'],
  ['west', 12, '1568,1060 1530,1180 1475,1330 1482,1568'],
  ['centre', 9, '210,82 300,240 350,310 375,345'],
  ['centre', 11, '0,1190 60,1000 130,820 190,650 240,500 290,385 370,330 560,210 680,158 710,160 760,210 840,255 1000,370 1200,560 1220,575 1350,660 1460,735 1580,835'],
  ['centre', 7, '0,920 30,935'],
  ['centre', 10, '900,1568 980,1545 1130,1500 1300,1490 1470,1450 1580,1435'],
  ['centre', 8, '1520,770 1580,787'],
  ['east', 9, '0,770 50,790 80,815 125,815 145,850 165,960 195,1080 210,1220 218,1420 280,1500 335,1568'],
  ['east', 9, '0,800 70,855 85,880 70,940 62,1100 72,1420 100,1568'],
  ['east', 10, '0,1440 130,1438 215,1430'],
];

const BORDERS = [
  ['west', '1568,1065 1525,1180 1468,1330 1476,1568'],
  ['centre', '0,1180 120,815 180,645 230,500 283,380 365,322 555,200 670,150 720,90'],
];

const PLACES = [
  ['west', 924, 1075, 129, 'Suárez'], ['west', 1475, 1615, 119, 'Munro'], ['west', 1013, 1312, 390, 'Villa Ballester'],
  ['west', 727, 848, 444, 'Loma'], ['west', 690, 887, 496, 'Hermosa'], ['west', 1291, 1540, 495, 'San Andres'],
  ['west', 18, 170, 499, 'Campo'], ['west', -6, 186, 551, 'de Mayo'], ['west', 355, 553, 545, 'Churruca'],
  ['west', 597, 718, 659, 'Loma'], ['west', 557, 756, 713, 'Hermosa'], ['west', 910, 1153, 721, 'Billinghurst'],
  ['west', 1287, 1524, 772, 'San Martín'], ['west', 2, 156, 770, 'William'], ['west', 35, 174, 823, 'Morris'],
  ['west', 807, 1049, 851, 'Villa Bosch'], ['west', 272, 522, 972, 'Hurlingham'], ['west', 635, 911, 1020, 'Cdad. Jardin'],
  ['west', 665, 880, 1073, 'Lomas de'], ['west', 681, 864, 1126, 'Palomar'], ['west', 1126, 1467, 1109, 'Santos Lugares'],
  ['west', 1021, 1200, 1259, 'Caseros'], ['west', 216, 440, 1421, 'Villa Tesei'], ['west', 649, 885, 1508, 'El Palomar'],
  ['west', 978, 1070, 1582, 'Villa'], ['centre', 315, 464, 155, 'Florida'], ['centre', 410, 758, 87, 'Vicente López'],
];

const DISTRICTS = [
  ['centre', 633, 836, 298, 'NÚÑEZ', 29], ['centre', 610, 935, 578, 'BELGRANO', 29], ['centre', 962, 1252, 808, 'PALERMO', 29],
  ['centre', 700, 890, 915, 'CHACARITA', 18], ['centre', 1350, 1518, 935, 'RECOLETA', 18], ['centre', 692, 1128, 1050, 'VILLA CRESPO', 29],
  ['centre', 220, 525, 1160, 'VILLA DEL', 29], ['centre', 250, 494, 1221, 'PARQUE', 29], ['centre', 783, 1122, 1355, 'CABALLITO', 29],
  ['centre', 1155, 1520, 1272, 'BALVANERA', 29], ['centre', 95, 355, 1383, 'MONTE CASTRO', 18], ['centre', 308, 618, 1533, 'FLORESTA', 29],
  ['east', 28, 130, 966, 'RETIRO', 18], ['east', 142, 375, 1372, 'PUERTO MADERO', 18],
];

const SHIELDS = [[940, 233, '4'], [220, 564, '8'], [616, 568, '8'], [1171, 640, '8'], [699, 813, '4'], [311, 867, '201'], [865, 1364, '201'], [351, 1478, '4']];

// x, y, buyers' share in degrees, total
const CLUSTERS = [
  [862, 1317.5, 155, '72'], [1285, 1295, 0, '38'], [1420.4, 1501.5, 48, '484'], [1202, 1619.5, 160, '106'], [1582, 1637.5, 246.5, '123'],
  [340, 1771.5, 110.5, '74'], [1464, 1813.5, 105.3, '88'], [1696, 1885.5, 151, '154'], [1832, 1911.5, 26.4, '170'], [1460, 1939.5, 35.5, '445'],
  [1092, 1957.5, 360, '65'], [1226, 2017.5, 42, '118'], [1604, 2034, 190, '71'], [1738.4, 2046, 0, '28'], [884, 2054, 68, '52'], [1374, 2082, 120, '96'],
];

const SPOTS = [[431.8, 1612, '19', GREEN], [913.8, 1650, '12', GREEN], [760, 1884, '14', GREEN], [1196, 1488, '15', GREEN], [1742, 1719.8, '61', GREEN], [1082, 1795.7, '12', PINK]];

const PlaceText = styled.text`
  font: 400 26px Roboto, sans-serif;
  fill: #5b5e66;
  stroke: #fff;
  stroke-width: 5px;
  stroke-linejoin: round;
  paint-order: stroke;
`;

const DistrictText = styled(PlaceText)`
  font-size: ${(p) => p.$size}px;
  font-weight: ${(p) => (p.$size > 20 ? 700 : 500)};
  fill: #66788a;
`;

const RoadText = styled(PlaceText)`
  font-size: 21px;
  fill: #7d4310;
  stroke: #fff6dc;
`;

const ProvinceText = styled(PlaceText)`
  font-size: 22px;
  font-weight: 500;
  fill: #959595;
  stroke-width: 4px;
`;

const ShieldText = styled.text`
  font: 700 18px Roboto, sans-serif;
  fill: #fff;
`;

const ClusterText = styled.text`
  font: 700 19.5px Roboto, sans-serif;
  fill: #000;
`;

const SpotText = styled.text`
  font: 400 22px Roboto, sans-serif;
  fill: #12201e;
`;

const R_OUT = 56, R_IN = 28.5;
const polar = (r, deg) => {
  const a = ((deg - 90) * Math.PI) / 180;
  return `${(r * Math.cos(a)).toFixed(2)} ${(r * Math.sin(a)).toFixed(2)}`;
};
const slice = (a, b) => {
  const big = b - a > 180 ? 1 : 0;
  return `M${polar(R_OUT, a)}A${R_OUT} ${R_OUT} 0 ${big} 1 ${polar(R_OUT, b)}L${polar(R_IN, b)}A${R_IN} ${R_IN} 0 ${big} 0 ${polar(R_IN, a)}Z`;
};

const Cluster = ({ x, y, deg, total }) => {
  const whole = deg === 0 || deg === 360;
  return (
    <g transform={`translate(${x} ${y})`}>
      {whole ? (
        <>
          <circle r="42.250" fill="none" stroke="#fff" strokeWidth="29.500" />
          <circle r="42.250" fill="none" stroke={deg ? GREEN : PINK} strokeWidth="26" />
        </>
      ) : (
        <g stroke="#fff" strokeWidth="2">
          <path d={slice(deg, 360)} fill={PINK} />
          <path d={slice(0, deg)} fill={GREEN} />
        </g>
      )}
      <ClusterText y="6.500" textAnchor="middle">{total}</ClusterText>
    </g>
  );
};

const CityMap = () => (
  <svg width="2456" height="728" viewBox="194 1320 2456 728">
    <defs>
      <path id="buenAyre" d="M468 1499C488 1494 504 1486 518 1470C540 1440 558 1390 587 1322" />
      <path id="lugones" d="M1452 1438C1478 1456 1520 1476 1552 1498C1580 1518 1600 1540 1618 1566" />
      <path id="bajo" d="M1893 1820C1897 1860 1902 1890 1904 1935" />
    </defs>
    <rect x="194" y="1320" width="2268" height="728" fill="#e8e8e8" />
    {AREAS.map(([s, c, pts], i) => <polygon key={i} points={project(s, pts)} fill={c} />)}
    {WATER.slice(0, 8).map(([s, pts], i) => <polygon key={i} points={project(s, pts)} fill="#aadaff" />)}
    <polygon points={project(...SAND)} fill="#ebe9e4" />
    <polygon points={project('east', '325,1385 480,1372 493,1432 440,1435 350,1425')} fill="#ebe9e4" />
    {WATER.slice(8).map(([s, pts], i) => <polygon key={i} points={project(s, pts)} fill="#aadaff" />)}
    <g fill="none" strokeLinejoin="round">
      {STREAMS.map(([s, w, pts], i) => <polyline key={i} points={project(s, pts)} stroke="#a5d8fd" strokeWidth={w} />)}
      {RAILS.map(([s, pts], i) => <polyline key={i} points={project(s, pts)} stroke="#d5d8dc" strokeWidth="2" />)}
      {STREETS.map(([s, w, pts], i) => <polyline key={i} points={project(s, pts)} stroke="#fff" strokeWidth={w - 0.8} />)}
      {HIGHWAYS.map(([s, w, pts], i) => <polyline key={i} points={project(s, pts)} stroke="#f6d169" strokeWidth={w} />)}
      {HIGHWAYS.map(([s, w, pts], i) => <polyline key={i} points={project(s, pts)} stroke="#ffeba3" strokeWidth={w - 4} />)}
      {BORDERS.map(([s, pts], i) => <polyline key={i} points={project(s, pts)} stroke="#9a9a9a" strokeWidth="1.500" strokeDasharray="5 4" />)}
      <polyline points={project('east', '612,82 1123,667')} stroke="#93bff2" strokeWidth="1.500" strokeDasharray="13 5" />
    </g>
    <rect x="2462" y="1320" width="188" height="728" fill="#e3e2de" />

    {PLACES.map(([s, a, b, y, name], i) => (
      <PlaceText key={i} x={px(s, a) - 1} y={py(s, y)} textLength={px(s, b) - px(s, a) + 2.5} lengthAdjust="spacingAndGlyphs">{name}</PlaceText>
    ))}
    {DISTRICTS.map(([s, a, b, y, name, size]) => (
      <DistrictText key={name} $size={size} x={px(s, a) - 1} y={py(s, y)} textLength={px(s, b) - px(s, a) + 2}>{name}</DistrictText>
    ))}
    <RoadText><textPath href="#buenAyre" textLength="212">Au Cam. del Buen Ayre</textPath></RoadText>
    <RoadText><textPath href="#lugones" textLength="203">Av. Leopoldo Lugones</textPath></RoadText>
    <RoadText><textPath href="#bajo" textLength="106">P.º del Bajo</textPath></RoadText>
    <RoadText transform="translate(1493 2044) rotate(-8)">Au 25 de Mayo</RoadText>
    <ProvinceText transform="translate(1009 1762) rotate(-69)" textLength="308">PROVINCIA DE BUENOS AIRES</ProvinceText>
    <ProvinceText transform="translate(1056 1698) rotate(-69)" textLength="156">BUENOS AIRES</ProvinceText>

    {SHIELDS.map(([x, y, n], i) => {
      const w = n.length > 1 ? 44 : 23;
      return (
        <g key={i} transform={`translate(${px('west', x)} ${py('west', y)})`}>
          <rect x={-w / 2} y="-11" width={w} height="22" fill="#679c40" />
          <ShieldText y="6.500" textAnchor="middle">{n}</ShieldText>
        </g>
      );
    })}
    <g stroke="#6b6f76" strokeWidth="2" fill="#fff">
      <path d="M1924 1985h22q3 0 3 3v18q0 4-4 5l-10 4-10-4q-4-1-4-5v-18q0-3 3-3z" />
      <path d="M404 2039h22q3 0 3 3v18h-28v-18q0-3 3-3z" />
      <path d="M180 2039h20q3 0 3 3v18h-23z" />
    </g>
    <text x="1935" y="2006" textAnchor="middle" fontSize="17" fontWeight="500" fill="#4c5058" fontFamily="Roboto, sans-serif">1</text>

    {SPOTS.map(([x, y, n, c]) => (
      <g key={`${x}`}>
        <circle cx={x} cy={y} r="20" fill={c} fillOpacity="0.8" />
        <SpotText x={x} y={y + 8} textAnchor="middle">{n}</SpotText>
      </g>
    ))}
    {CLUSTERS.map(([x, y, deg, total]) => <Cluster key={`${x}`} x={x} y={y} deg={deg} total={total} />)}
  </svg>
);

const MENU = [
  [DotsIcon, 92, true], [HomeIcon, 94], [NewIcon, 94], [SearchIcon, 93], [BarsIcon, 94], [DotsIcon, 93.5, true],
  [UserAddIcon, 91.5], [MoneyIcon, 97], [PulseIcon, 92], [PowerIcon, 94],
];

export default function App() {
  return (
    <Page>
      <GlobalStyle />
      <TopBar>
        <Brand />
        <TopNav>
          <PulseIcon light />
          <NavLink>Actividad</NavLink>
          <svg width="20" height="12" viewBox="0 0 20 12" fill="none" stroke="currentColor" strokeWidth="3.800" strokeLinecap="round">
            <path d="m2 2.500 8 7.500 8-7.500" />
          </svg>
          <PowerSlot><PowerIcon size={29} /></PowerSlot>
        </TopNav>
      </TopBar>
      <Body>
        <Sidebar>
          <Cover />
          {MENU.map(([Icon, h, muted], i) => <MenuItem key={i} $h={h} $muted={muted}><Icon /></MenuItem>)}
        </Sidebar>
        <Content>
          <Card $h={860} $open>
            <ActivityChart />
          </Card>
          <Card $h={1080}>
            <CardHeader>
              <CardTitle>MAPA DE VENDEDORES - COMPRADORES</CardTitle>
              <InfoButton aria-label="Información">
                <svg width="14" height="34" viewBox="0 0 14 34" fill="currentColor">
                  <circle cx="7" cy="5.500" r="4.600" />
                  <path d="M2 13h7.500q1.500 0 1.500 1.500V28h1q1 0 1 1v3q0 1-1 1H2q-1 0-1-1v-3q0-1 1-1h1V18H2q-1 0-1-1v-3q0-1 1-1z" />
                </svg>
              </InfoButton>
            </CardHeader>
            <CardBody>
              <ToggleRow $gap={24}><Track $color={PINK}><Knob /></Track><ToggleText>Vendedores</ToggleText></ToggleRow>
              <ToggleRow $gap={22}><Track $color={GREEN}><Knob /></Track><ToggleText>Compradores</ToggleText></ToggleRow>
              <MapFrame>
                <CityMap />
                <MapControl aria-label="Pantalla completa">
                  <svg width="36" height="36" viewBox="0 0 36 36" fill="none" stroke="#666" strokeWidth="4">
                    <path d="M2 12V2h10M24 2h10v10M34 24v10H24M12 34H2V24" />
                  </svg>
                </MapControl>
                <Legend>
                  <LegendItem><Swatch $color={GREEN} />Comprador</LegendItem>
                  <LegendItem><Swatch $color={PINK} />Vendedor</LegendItem>
                </Legend>
              </MapFrame>
            </CardBody>
          </Card>
        </Content>
      </Body>
      <BackToTop aria-label="Subir">
        <svg width="28" height="32" viewBox="0 0 28 32" fill="none" stroke="#fff" strokeWidth="4.500" strokeLinecap="round" strokeLinejoin="round">
          <path d="M14 28V5M4 14 14 4l10 10" />
        </svg>
      </BackToTop>
    </Page>
  );
}
